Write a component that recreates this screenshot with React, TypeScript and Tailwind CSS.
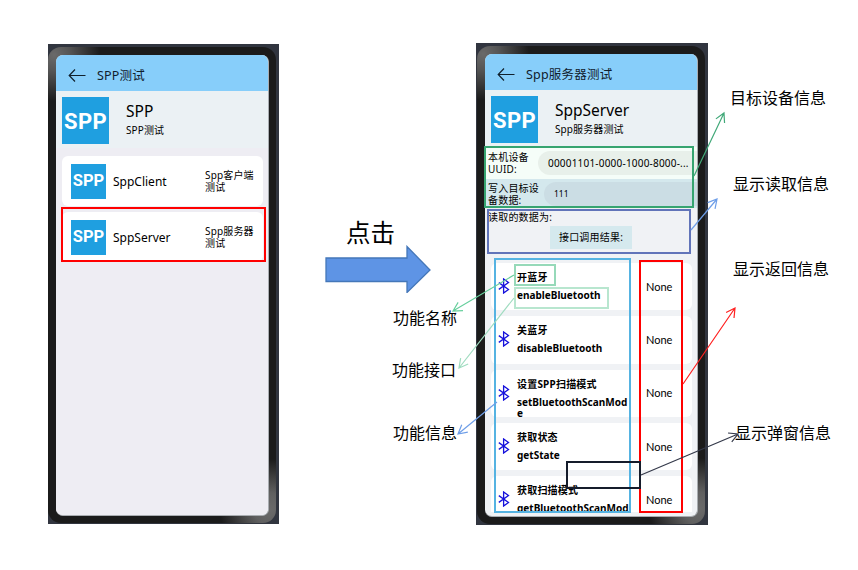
import type { ReactNode } from 'react';

const FONT = "font-['Noto_Sans','Noto_Sans_CJK_SC',sans-serif]";

function BackArrow() {
  return (
    <svg className="h-4 w-[18px] shrink-0" viewBox="0 0 18 16" fill="none" stroke="#10202c" strokeWidth="1.2">
      <path d="M7 1.5 1.2 7.5 7 13.5M1.2 7.5H17.5" />
    </svg>
  );
}

function Bluetooth() {
  return (
    <svg className="h-4 w-3 shrink-0" viewBox="0 0 12 16" fill="none" stroke="#1712dc" strokeWidth="1.3">
      <path d="M0.8 4.6 10.5 11.4 5.6 15V1L10.5 4.6 0.8 11.4" />
    </svg>
  );
}

function Logo({ large = false }: { large?: boolean }) {
  return (
    <div
      className={
        large
          ? "flex size-[47px] shrink-0 items-center justify-center bg-[#1f9fe0] pt-px font-['Roboto',sans-serif] text-[22px] font-bold tracking-[0.3px] text-white"
          : "flex size-[35px] shrink-0 items-center justify-center bg-[#1f9fe0] pt-px font-['Roboto',sans-serif] text-[16.5px] font-bold text-white"
      }
    >
      SPP
    </div>
  );
}

function Phone({ children }: { children: ReactNode }) {
  return (
    <div className="h-full overflow-hidden bg-[#31353f] pt-[3px] pr-[3px] pb-px">
      <div className="h-full rounded-[13px] bg-[radial-gradient(circle_at_6px_8px,#6a6a6a_0,#555_16px,#1b1b1b00_46px),radial-gradient(circle_at_222px_462px,#6a6a6a_0,#606060_16px,#1b1b1b00_50px)] bg-[#1b1b1b] pt-2 pr-[7px] pb-[7px] pl-2">
        <div className="flex h-full flex-col overflow-hidden rounded-[7px] border-r border-b border-[#a9adb1] bg-[#f0f2f5]">
          {children}
        </div>
      </div>
    </div>
  );
}

function Header({ title }: { title: string }) {
  return (
    <div className="flex h-9 shrink-0 items-center gap-[11px] bg-[#87cefa] pt-[5px] pl-3 text-[12.5px] whitespace-nowrap text-[#10202c]">
      <BackArrow />
      <span className="pt-[2px] tracking-[0.2px]">{title}</span>
    </div>
  );
}

function Intro({ title, subtitle }: { title: string; subtitle: string }) {
  return (
    <div className="flex h-[57px] shrink-0 gap-[17px] bg-[#ebf1f4] pt-[6px] pl-[6px] text-black">
      <Logo large />
      <div className="flex flex-col pt-[5px] whitespace-nowrap">
        <span className="text-[15.5px] leading-[19px]">{title}</span>
        <span className="text-[10px] leading-[18px] tracking-[0.1px]">{subtitle}</span>
      </div>
    </div>
  );
}

function TestCard({ name, desc }: { name: string; desc: string }) {
  return (
    <div className="flex h-[50px] items-center rounded-md bg-white pl-[9px]">
      <Logo />
      <span className="ml-[7px] w-[92px] pt-px text-[12px]">{name}</span>
      <span className="w-[51px] text-[10px] leading-[12px] tracking-[0.15px] break-all">{desc}</span>
    </div>
  );
}

const features = [
  { name: '开蓝牙', api: 'enableBluetooth' },
  { name: '关蓝牙', api: 'disableBluetooth' },
  { name: '设置SPP扫描模式', api: 'setBluetoothScanMode' },
  { name: '获取状态', api: 'getState' },
  { name: '获取扫描模式', api: 'getBluetoothScanMode' },
];

function Feature({ name, api }: { name: string; api: string }) {
  return (
    <div className="flex h-[47.3px] shrink-0 overflow-hidden rounded-md bg-white pl-[7px]">
      <div className="pt-[15px]">
        <Bluetooth />
      </div>
      <div className="ml-[7px] w-[114px] pt-[6px] text-[10px] font-bold">
        <div className="leading-[17px] tracking-[0.2px]">{name}</div>
        <div className="pt-[4px] leading-[11px] break-all">{api}</div>
      </div>
      <span className="ml-[15px] self-center pt-px font-['Lato',sans-serif] text-[11px]">None</span>
    </div>
  );
}

function ClientPhone() {
  return (
    <Phone>
      <Header title="SPP测试" />
      <div className="flex grow flex-col bg-[#eeedf3]">
        <Intro title="SPP" subtitle="SPP测试" />
        <div className="flex flex-col gap-[6px] pt-2 pr-[5px] pl-[6px]">
          <TestCard name="SppClient" desc="Spp客户端测试" />
          <TestCard name="SppServer" desc="Spp服务器测试" />
        </div>
      </div>
    </Phone>
  );
}

function ServerPhone() {
  return (
    <Phone>
      <Header title="Spp服务器测试" />
      <Intro title="SppServer" subtitle="Spp服务器测试" />
      <div className="flex h-8 shrink-0 items-center bg-[#f5fdf8] pl-[3px] text-[10px] leading-[12px]">
        <span className="w-[50px] tracking-[0.2px]">本机设备UUID:</span>
        <span className="flex h-6 grow items-center rounded-l-full bg-[#e8f0ea] pl-[10px] tracking-[0.2px] whitespace-nowrap">
          00001101-0000-1000-8000-...
        </span>
      </div>
      <div className="flex h-[29px] shrink-0 items-center bg-[#d4e8ed] pl-[3px] text-[10px] leading-[12px]">
        <span className="w-[56px] pr-[4px] tracking-[0.2px]">写入目标设备数据:</span>
        <span className="flex h-6 grow items-center rounded-l-full bg-[#cbdde4] pl-[10px] text-[8.5px]">111</span>
      </div>
      <div className="flex h-[50px] shrink-0 flex-col pl-[3px] text-[10px] tracking-[0.2px]">
        <span className="h-[18px] leading-[18px]">读取的数据为:</span>
        <span className="ml-[62px] flex h-[23px] w-[82px] items-center justify-center bg-[#d5e9ee]">
          接口调用结果:
        </span>
      </div>
      <div className="flex min-h-0 grow flex-col gap-[6px] overflow-hidden pt-[5px] pr-[5px] pl-[6px]">
        {features.map((f) => (
          <Feature key={f.api} name={f.name} api={f.api} />
        ))}
      </div>
      <div className="h-[4px] shrink-0" />
    </Phone>
  );
}

function Pointer({ x1, y1, x2, y2, color }: { x1: number; y1: number; x2: number; y2: number; color: string }) {
  const a = Math.atan2(y2 - y1, x2 - x1);
  const wing = (d: number) => `${x2 - 10 * Math.cos(a + d)} ${y2 - 10 * Math.sin(a + d)}`;
  return (
    <path
      d={`M${x1} ${y1}L${x2} ${y2}M${wing(0.5)}L${x2} ${y2}L${wing(-0.5)}`}
      fill="none"
      stroke={color}
      strokeWidth="1.2"
    />
  );
}

export default function App() {
  return (
    <div className={`relative h-[570px] w-[858px] overflow-hidden bg-white text-black ${FONT}`}>
      <div className="flex items-start pt-11 pl-12">
        <div className="h-[480px] w-[231px] shrink-0">
          <ClientPhone />
        </div>
        <div className="flex w-[197px] shrink-0 flex-col pt-[172px] pl-[46px]">
          <span className="pl-[21px] text-[24.5px] leading-[34px]">点击</span>
          <svg className="-mt-[5px] h-12 w-[106px]" viewBox="0 0 106 48">
            <path d="M1 13H82V1.5L105 25 82 47.5V36.5H1Z" fill="#5e94e5" stroke="#4477b9" strokeWidth="1.3" />
          </svg>
        </div>
        <div className="-mt-px h-[482px] w-[232px] shrink-0 bg-[#31353f] pl-px">
          <ServerPhone />
        </div>
      </div>

      <div className="absolute top-[207px] left-[61px] h-[55px] w-[205px] border-2 border-[#ff0000]" />
      <div className="absolute top-[146px] left-[484px] h-[62px] w-[210px] border-2 border-[#36a470]" />
      <div className="absolute top-[209px] left-[487px] h-[45px] w-[204px] border-2 border-[#6174b9]" />
      <div className="absolute top-[258px] left-[494px] h-[255px] w-[137px] border-2 border-[#55b3e2]" />
      <div className="absolute top-[264px] left-[514px] h-[22px] w-[42px] border-2 border-[#96d9b9]" />
      <div className="absolute top-[287px] left-[514px] h-[22px] w-[95px] border-2 border-[#b8e6cf]" />
      <div className="absolute top-[260px] left-[639px] h-[253px] w-[44px] border-2 border-[#ff0000]" />
      <div className="absolute top-[461px] left-[566px] h-[28px] w-[75px] border-2 border-[#151c2b]" />

      <span className="absolute top-[306px] left-[393px] text-[16px] leading-6 whitespace-nowrap">功能名称</span>
      <span className="absolute top-[358px] left-[392px] text-[16px] leading-6 whitespace-nowrap">功能接口</span>
      <span className="absolute top-[421px] left-[393px] text-[16px] leading-6 whitespace-nowrap">功能信息</span>
      <span className="absolute top-[86px] left-[730px] text-[16px] leading-6 whitespace-nowrap">目标设备信息</span>
      <span className="absolute top-[172px] left-[733px] text-[16px] leading-6 whitespace-nowrap">显示读取信息</span>
      <span className="absolute top-[257px] left-[733px] text-[16px] leading-6 whitespace-nowrap">显示返回信息</span>
      <span className="absolute top-[421px] left-[735px] text-[16px] leading-6 whitespace-nowrap">显示弹窗信息</span>

      <svg className="pointer-events-none absolute inset-0 size-full" viewBox="0 0 858 570">
        <Pointer x1={514} y1={275} x2={453} y2={311} color="#67cf9d" />
        <Pointer x1={514} y1={298} x2={459} y2={368} color="#a0dcc0" />
        <Pointer x1={497} y1={402} x2={458} y2={434} color="#6e9ee8" />
        <Pointer x1={694} y1={176} x2={724} y2={113} color="#42a979" />
        <Pointer x1={691} y1={230} x2={717} y2={199} color="#6e9ee8" />
        <Pointer x1={683} y1={384} x2={735} y2={308} color="#ff2020" />
        <Pointer x1={641} y1={475} x2={738} y2={434} color="#34394a" />
      </svg>
    </div>
  );
}
